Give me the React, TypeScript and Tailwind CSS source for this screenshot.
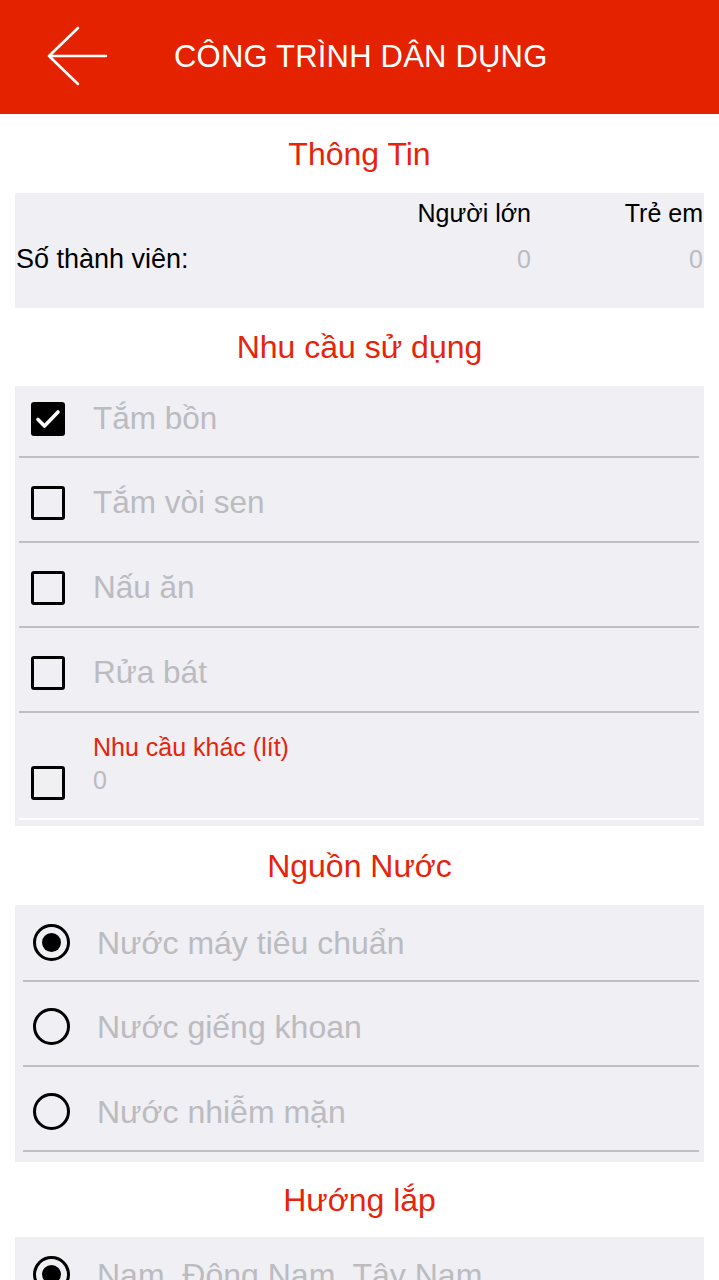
const font = { fontFamily: '"Liberation Sans", Arial, sans-serif' };

function Checkbox({ checked }: { checked?: boolean }) {
  return checked ? (
    <div className="w-[34px] h-[34px] rounded-[3px] bg-black flex items-center justify-center shrink-0">
      <svg width="34" height="34" viewBox="0 0 34 34">
        <path d="M7 17.5 L13.5 24 L27 10" fill="none" stroke="white" strokeWidth="3.6" strokeLinecap="round" strokeLinejoin="round" />
      </svg>
    </div>
  ) : (
    <div className="w-[34px] h-[34px] rounded-[3px] border-[3px] border-black shrink-0" />
  );
}

function Radio({ checked }: { checked?: boolean }) {
  return (
    <div className="w-[37px] h-[37px] rounded-full border-[3px] border-black flex items-center justify-center shrink-0">
      {checked && <div className="w-[19px] h-[19px] rounded-full bg-black" />}
    </div>
  );
}

function SectionTitle({ text, h = "h-[79px]" }: { text: string; h?: string }) {
  return (
    <div className={`${h} flex items-center justify-center text-[32px] text-[#e8230b]`}>
      {text}
    </div>
  );
}

export default function App() {
  const needs = ["Tắm vòi sen", "Nấu ăn", "Rửa bát"];
  const sources = ["Nước giếng khoan", "Nước nhiễm mặn"];

  return (
    <div className="min-h-screen bg-white" style={font}>
      <header className="h-[114px] bg-[#e52200] flex items-center">
        <svg className="ml-[46px] shrink-0" width="62" height="62" viewBox="0 0 62 62">
          <path d="M60 30 H3 M32 2 L3 30 L32 58" fill="none" stroke="white" strokeWidth="2.6" strokeLinecap="round" strokeLinejoin="round" />
        </svg>
        <h1 className="ml-[66px] text-white text-[31px] tracking-[0.2px]">CÔNG TRÌNH DÂN DỤNG</h1>
      </header>

      <SectionTitle text="Thông Tin" />
      <div className="mx-[15px] h-[115px] bg-[#efeff4] pl-px pr-px pt-[5px]">
        <div className="flex text-[25px] text-black leading-[30px]">
          <div className="flex-1" />
          <div className="w-[150px] text-right">Người lớn</div>
          <div className="w-[172px] text-right">Trẻ em</div>
        </div>
        <div className="flex leading-[30px] mt-[16px]">
          <div className="flex-1 text-black text-[27px]">Số thành viên:</div>
          <div className="w-[150px] text-right text-[25px] text-[#bbbbc0]">0</div>
          <div className="w-[172px] text-right text-[25px] text-[#bbbbc0]">0</div>
        </div>
      </div>

      <SectionTitle text="Nhu cầu sử dụng" h="h-[78px]" />
      <div className="mx-[15px] bg-[#efeff4] pb-[6px]">
        <div className="mx-[4px] mr-[5px] h-[72px] border-b-2 border-[#bfbfc3] flex items-center pb-[4px] pl-[12px]">
          <Checkbox checked />
          <span className="ml-[28px] text-[31.5px] text-[#bbbbc0]">Tắm bồn</span>
        </div>
        {needs.map((n) => (
          <div key={n} className="mx-[4px] mr-[5px] h-[85px] border-b-2 border-[#bfbfc3] flex items-center pt-[6px] pl-[12px]">
            <Checkbox />
            <span className="ml-[28px] text-[31.5px] text-[#bbbbc0]">{n}</span>
          </div>
        ))}
        <div className="mx-[4px] mr-[5px] h-[107px] border-b-2 border-white flex items-center pl-[12px]">
          <div className="pt-[34px]">
            <Checkbox />
          </div>
          <div className="ml-[28px] flex flex-col -mt-[4px]">
            <span className="text-[25px] leading-[30px] text-[#e8230b]">Nhu cầu khác (lít)</span>
            <span className="text-[25px] leading-[30px] mt-[3px] text-[#bbbbc0]">0</span>
          </div>
        </div>
      </div>

      <SectionTitle text="Nguồn Nước" />
      <div className="mx-[15px] bg-[#efeff4] pb-[10px]">
        <div className="ml-[8px] mr-[5px] h-[77px] border-b-2 border-[#bfbfc3] flex items-center pl-[10px]">
          <Radio checked />
          <span className="ml-[27px] text-[32px] text-[#bbbbc0]">Nước máy tiêu chuẩn</span>
        </div>
        {sources.map((s) => (
          <div key={s} className="ml-[8px] mr-[5px] h-[85px] border-b-2 border-[#bfbfc3] flex items-center pt-[6px] pl-[10px]">
            <Radio />
            <span className="ml-[27px] text-[32px] text-[#bbbbc0]">{s}</span>
          </div>
        ))}
      </div>

      <SectionTitle text="Hướng lắp" h="h-[75px]" />
      <div className="mx-[15px] bg-[#efeff4] pb-[10px]">
        <div className="ml-[8px] mr-[5px] h-[77px] border-b-2 border-[#bfbfc3] flex items-center pl-[10px]">
          <Radio checked />
          <span className="ml-[27px] text-[32px] text-[#bbbbc0]">Nam, Đông Nam, Tây Nam</span>
        </div>
        <div className="ml-[8px] mr-[5px] h-[85px] border-b-2 border-[#bfbfc3] flex items-center pt-[6px] pl-[10px]">
          <Radio />
          <span className="ml-[27px] text-[32px] text-[#bbbbc0]">Bắc, Đông Bắc, Tây Bắc</span>
        </div>
      </div>
    </div>
  );
}
